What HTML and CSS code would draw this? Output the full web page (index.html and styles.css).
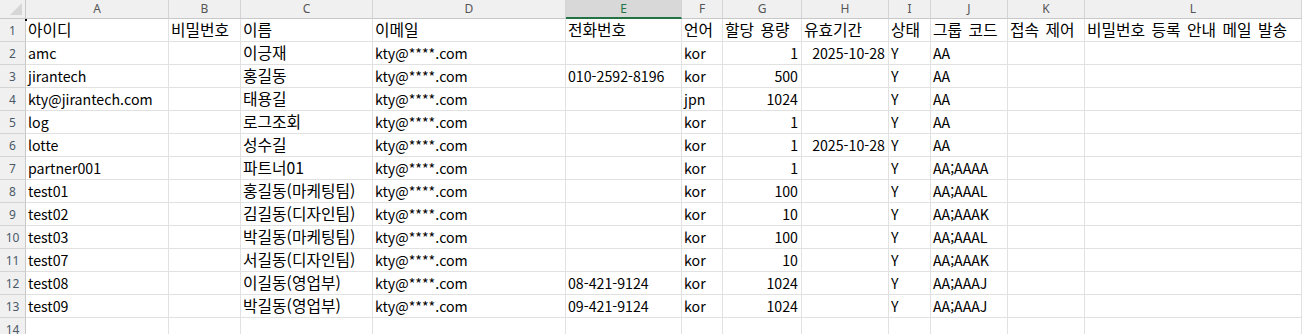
FILE: index.html
```html
<!DOCTYPE html>
<html lang="ko">
<head>
<meta charset="utf-8">
<title>Sheet</title>
<link rel="stylesheet" href="styles.css">
</head>
<body>
<div class="sheet">
  <div class="corner"><span class="tri"></span></div>
  <div class="ch">A</div><div class="ch">B</div><div class="ch">C</div><div class="ch">D</div><div class="ch sel">E</div><div class="ch">F</div><div class="ch">G</div><div class="ch">H</div><div class="ch">I</div><div class="ch">J</div><div class="ch">K</div><div class="ch">L</div>

  <div class="rh">1</div><div class="c k first">아이디</div><div class="c k">비밀번호</div><div class="c k">이름</div><div class="c k">이메일</div><div class="c k">전화번호</div><div class="c k">언어</div><div class="c k">할당 용량</div><div class="c k">유효기간</div><div class="c k">상태</div><div class="c k">그룹 코드</div><div class="c k">접속 제어</div><div class="c k">비밀번호 등록 안내 메일 발송</div>

  <div class="rh">2</div><div class="c">amc</div><div class="c"></div><div class="c k">이긍재</div><div class="c">kty@****.com</div><div class="c"></div><div class="c">kor</div><div class="c r">1</div><div class="c r">2025-10-28</div><div class="c">Y</div><div class="c">AA</div><div class="c"></div><div class="c"></div>

  <div class="rh">3</div><div class="c">jirantech</div><div class="c"></div><div class="c k">홍길동</div><div class="c">kty@****.com</div><div class="c">010-2592-8196</div><div class="c">kor</div><div class="c r">500</div><div class="c r"></div><div class="c">Y</div><div class="c">AA</div><div class="c"></div><div class="c"></div>

  <div class="rh">4</div><div class="c">kty@jirantech.com</div><div class="c"></div><div class="c k">태용길</div><div class="c">kty@****.com</div><div class="c"></div><div class="c">jpn</div><div class="c r">1024</div><div class="c r"></div><div class="c">Y</div><div class="c">AA</div><div class="c"></div><div class="c"></div>

  <div class="rh">5</div><div class="c">log</div><div class="c"></div><div class="c k">로그조회</div><div class="c">kty@****.com</div><div class="c"></div><div class="c">kor</div><div class="c r">1</div><div class="c r"></div><div class="c">Y</div><div class="c">AA</div><div class="c"></div><div class="c"></div>

  <div class="rh">6</div><div class="c">lotte</div><div class="c"></div><div class="c k">성수길</div><div class="c">kty@****.com</div><div class="c"></div><div class="c">kor</div><div class="c r">1</div><div class="c r">2025-10-28</div><div class="c">Y</div><div class="c">AA</div><div class="c"></div><div class="c"></div>

  <div class="rh">7</div><div class="c">partner001</div><div class="c"></div><div class="c k">파트너01</div><div class="c">kty@****.com</div><div class="c"></div><div class="c">kor</div><div class="c r">1</div><div class="c r"></div><div class="c">Y</div><div class="c">AA;AAAA</div><div class="c"></div><div class="c"></div>

  <div class="rh">8</div><div class="c">test01</div><div class="c"></div><div class="c k">홍길동(마케팅팀)</div><div class="c">kty@****.com</div><div class="c"></div><div class="c">kor</div><div class="c r">100</div><div class="c r"></div><div class="c">Y</div><div class="c">AA;AAAL</div><div class="c"></div><div class="c"></div>

  <div class="rh">9</div><div class="c">test02</div><div class="c"></div><div class="c k">김길동(디자인팀)</div><div class="c">kty@****.com</div><div class="c"></div><div class="c">kor</div><div class="c r">10</div><div class="c r"></div><div class="c">Y</div><div class="c">AA;AAAK</div><div class="c"></div><div class="c"></div>

  <div class="rh">10</div><div class="c">test03</div><div class="c"></div><div class="c k">박길동(마케팅팀)</div><div class="c">kty@****.com</div><div class="c"></div><div class="c">kor</div><div class="c r">100</div><div class="c r"></div><div class="c">Y</div><div class="c">AA;AAAL</div><div class="c"></div><div class="c"></div>

  <div class="rh">11</div><div class="c">test07</div><div class="c"></div><div class="c k">서길동(디자인팀)</div><div class="c">kty@****.com</div><div class="c"></div><div class="c">kor</div><div class="c r">10</div><div class="c r"></div><div class="c">Y</div><div class="c">AA;AAAK</div><div class="c"></div><div class="c"></div>

  <div class="rh">12</div><div class="c">test08</div><div class="c"></div><div class="c k">이길동(영업부)</div><div class="c">kty@****.com</div><div class="c">08-421-9124</div><div class="c">kor</div><div class="c r">1024</div><div class="c r"></div><div class="c">Y</div><div class="c">AA;AAAJ</div><div class="c"></div><div class="c"></div>

  <div class="rh">13</div><div class="c">test09</div><div class="c"></div><div class="c k">박길동(영업부)</div><div class="c">kty@****.com</div><div class="c">09-421-9124</div><div class="c">kor</div><div class="c r">1024</div><div class="c r"></div><div class="c">Y</div><div class="c">AA;AAAJ</div><div class="c"></div><div class="c"></div>

  <div class="rh">14</div><div class="c"></div><div class="c"></div><div class="c"></div><div class="c"></div><div class="c"></div><div class="c"></div><div class="c"></div><div class="c"></div><div class="c"></div><div class="c"></div><div class="c"></div><div class="c"></div>
</div>
</body>
</html>
```

FILE: styles.css
```css
html, body {
  margin: 0;
  padding: 0;
  background: #ffffff;
  overflow: hidden;
}

.sheet {
  display: grid;
  grid-template-columns: 26px 143px 72px 132px 193px 116px 41px 79px 87px 42px 77px 77px 217px;
  grid-template-rows: 19px repeat(14, 23px);
  width: 1302px;
  font-family: "Noto Sans CJK KR", "Noto Sans", sans-serif;
  font-size: 14.2px;
  color: #000000;
}

.sheet > div {
  box-sizing: border-box;
  white-space: nowrap;
}

.corner {
  position: relative;
  background: #f0f0f0;
  border-right: 1px solid #c8c8c8;
  border-bottom: 1px solid #c8c8c8;
}

.tri {
  position: absolute;
  right: 3px;
  bottom: 3px;
  width: 0;
  height: 0;
  border-left: 12px solid transparent;
  border-bottom: 12px solid #d6d6d6;
}

.ch {
  background: #f0f0f0;
  border-right: 1px solid #d4d4d4;
  border-bottom: 1px solid #c8c8c8;
  color: #555555;
  font-family: "Noto Sans", sans-serif;
  font-size: 12px;
  display: flex;
  align-items: center;
  justify-content: center;
  line-height: 1;
}

.ch.sel {
  background: #d8d8d8;
  color: #217346;
  border-bottom: 2px solid #217346;
}

.rh {
  background: #f0f0f0;
  border-right: 1px solid #c8c8c8;
  border-bottom: 1px solid #d4d4d4;
  color: #4a5968;
  font-family: "Noto Sans", sans-serif;
  font-size: 12px;
  display: flex;
  align-items: center;
  justify-content: center;
  line-height: 1;
  padding-top: 2px;
}

.c {
  border-right: 1px solid #e1e1e1;
  border-bottom: 1px solid #e1e1e1;
  padding: 0 3px 0 2px;
  display: flex;
  align-items: center;
  line-height: 1;
}

.c.k {
  font-size: 15.8px;
  word-spacing: 2px;
}

.c.r {
  justify-content: flex-end;
}

.c.first {
  position: relative;
}

.c.first::before {
  content: "";
  position: absolute;
  left: -1px;
  top: 0;
  width: 2px;
  height: 2px;
  background: #000000;
}
```
